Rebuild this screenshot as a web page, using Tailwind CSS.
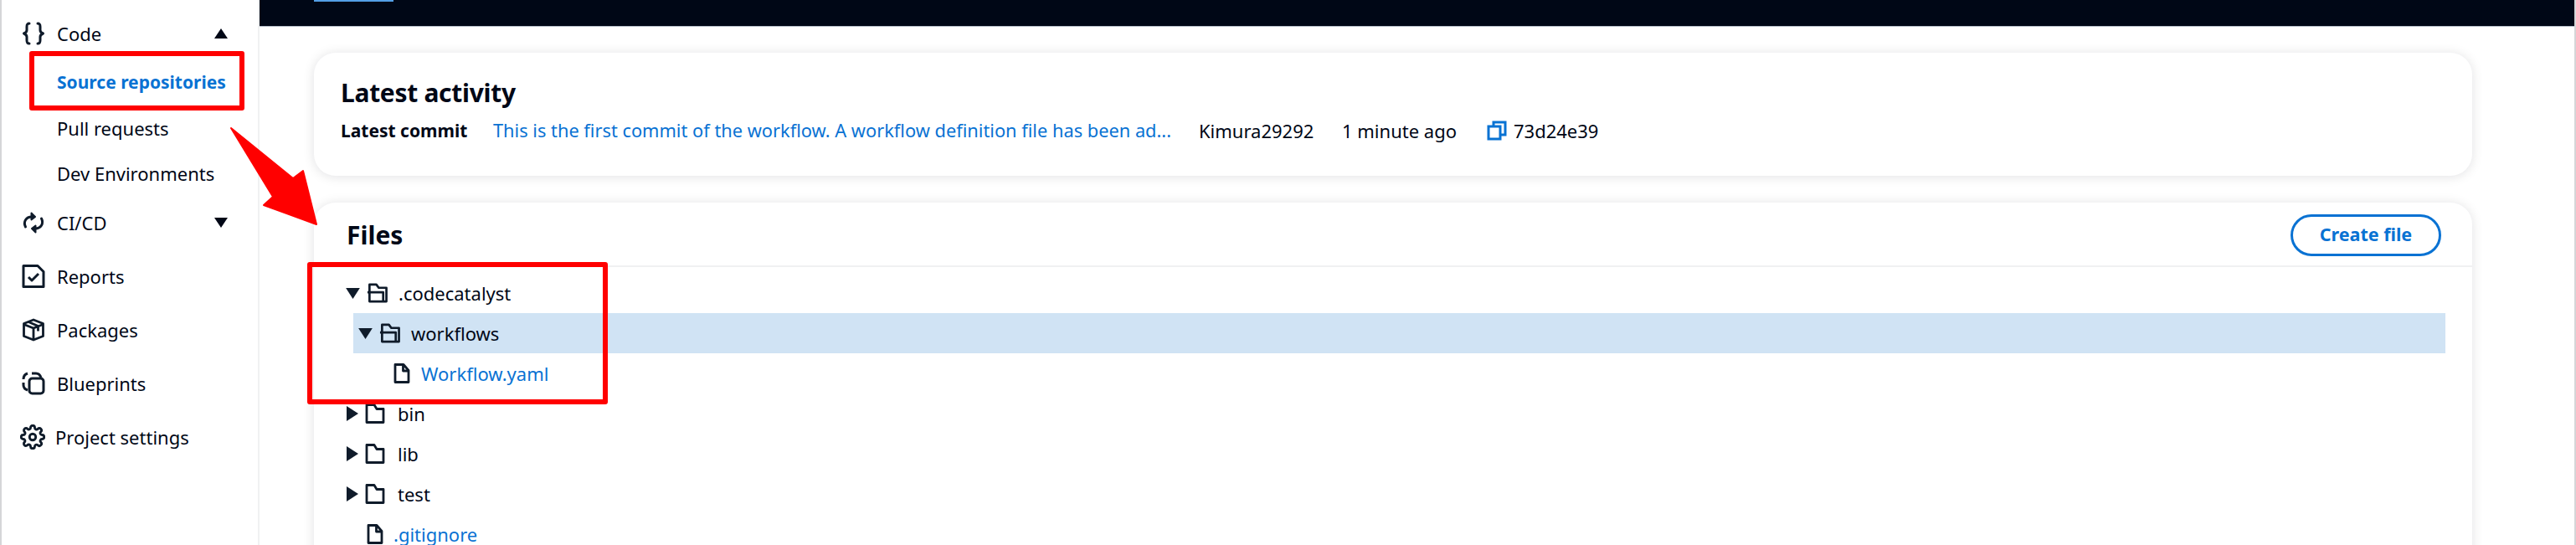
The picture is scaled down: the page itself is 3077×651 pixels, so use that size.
<!DOCTYPE html>
<html>
<head>
<meta charset="utf-8">
<script src="https://cdn.jsdelivr.net/npm/@tailwindcss/browser@4"></script>
</head>
<body class="bg-white">
<div class="relative flex w-[3077px] h-[651px] overflow-hidden bg-white border-x-2 border-[#d5d6d8] font-['Noto_Sans',sans-serif] text-[22px] text-[#000716]">
  <nav class="w-[308px] h-full shrink-0 border-r-2 border-[#f0f1f2] pt-2">
    <div class="flex items-center h-[64px]">
      <svg class="ml-[24px] w-[28px] h-[28px]" viewBox="0 0 28 28" fill="none" stroke="#0f1b2a" stroke-width="3" stroke-linecap="round" stroke-linejoin="round"><path d="M9 2C6 2 6 4 6 6v4c0 2-1 3-3.500 4C5 15 6 16 6 18v4c0 2 0 4 3 4"/><path d="M19 2c3 0 3 2 3 4v4c0 2 1 3 3.500 4-2.500 1-3.500 2-3.500 4v4c0 2 0 4-3 4"/></svg>
      <span class="ml-[14px] flex-1">Code</span>
      <svg class="mr-[36px] w-[16px] h-[12px]" viewBox="0 0 16 12"><path d="M8 0l8 12H0z" fill="#000716"/></svg>
    </div>
    <div class="pl-[66px]">
      <div class="h-[54px] flex items-center font-bold text-[21px] text-[#0972d3]">Source repositories</div>
      <div class="h-[54px] flex items-center">Pull requests</div>
      <div class="h-[54px] flex items-center">Dev Environments</div>
    </div>
    <div class="flex items-center h-[64px]">
      <svg class="ml-[24px] w-[28px] h-[28px]" viewBox="0 0 28 28" fill="none" stroke="#0f1b2a" stroke-width="3" stroke-linejoin="round" stroke-linecap="round"><path d="M4.500 19C1.500 13 5 7 12 7"/><path d="M11.500 2.500L16 7l-4.500 3.500z" fill="#0f1b2a" stroke-width="2"/><path d="M23.500 9C26.500 15 23 21 16 21"/><path d="M16.500 25.500L12 21l4.500-3.500z" fill="#0f1b2a" stroke-width="2"/></svg>
      <span class="ml-[14px] flex-1">CI/CD</span>
      <svg class="mr-[36px] w-[16px] h-[12px]" viewBox="0 0 16 12"><path d="M8 12L16 0H0z" fill="#000716"/></svg>
    </div>
    <div class="flex items-center h-[64px]">
      <svg class="ml-[24px] w-[28px] h-[28px]" viewBox="0 0 28 28" fill="none" stroke="#0f1b2a" stroke-width="3" stroke-linejoin="round"><path d="M2 1.500h17L26 8.500V26.500H2z"/><path d="M8 15l4 4 8-8"/></svg>
      <span class="ml-[14px]">Reports</span>
    </div>
    <div class="flex items-center h-[64px]">
      <svg class="ml-[24px] w-[28px] h-[28px]" viewBox="0 0 28 28" fill="none" stroke="#0f1b2a" stroke-width="2.800" stroke-linejoin="round"><path d="M14 2l11.500 4.500v15L14 26 2.500 21.500v-15z"/><path d="M2.500 7.500L14 12l11.500-4.500M14 12v14M8 4.500L19.500 9.500v6"/></svg>
      <span class="ml-[14px]">Packages</span>
    </div>
    <div class="flex items-center h-[64px]">
      <svg class="ml-[24px] w-[28px] h-[28px]" viewBox="0 0 28 28" fill="none" stroke="#0f1b2a" stroke-width="3" stroke-linejoin="round"><rect x="9" y="8" width="17" height="18" rx="3.500"/><path d="M7 22c-3-1-5-3-5-6v-3M2 9c0-3 2-6 5-7M12 2h5c3 0 5 2 6 5"/></svg>
      <span class="ml-[14px]">Blueprints</span>
    </div>
    <div class="flex items-center h-[64px]">
      <svg class="ml-[22px] w-[30px] h-[30px]" viewBox="0 0 24 24" fill="none" stroke="#0f1b2a" stroke-width="2.300" stroke-linejoin="round"><circle cx="12" cy="12" r="3"/><path d="M19.400 15a1.700 1.700 0 0 0 .3 1.800l.1.1a2 2 0 1 1-2.900 2.900l-.1-.1a1.700 1.700 0 0 0-2.800 1.200V21a2 2 0 1 1-4 0v-.1a1.700 1.700 0 0 0-2.900-1.200l-.1.1a2 2 0 1 1-2.800-2.900l.1-.1a1.700 1.700 0 0 0-1.200-2.800H3a2 2 0 1 1 0-4h.1a1.700 1.700 0 0 0 1.200-2.900l-.1-.1a2 2 0 1 1 2.900-2.800l.1.1a1.700 1.700 0 0 0 1.800.3H9a1.700 1.700 0 0 0 1-1.500V3a2 2 0 1 1 4 0v.1a1.700 1.700 0 0 0 2.900 1.200l.1-.1a2 2 0 1 1 2.800 2.900l-.1.1a1.700 1.700 0 0 0-.3 1.800V9a1.700 1.700 0 0 0 1.500 1H21a2 2 0 1 1 0 4h-.1a1.700 1.700 0 0 0-1.500 1z"/></svg>
      <span class="ml-[12px]">Project settings</span>
    </div>
  </nav>

  <main class="flex-1 min-w-0">
    <div class="h-[32px] bg-[#000716] border-b border-[#b6bec9]">
      <div class="ml-[65px] w-[95px] h-[2px] bg-[#539fe5]"></div>
    </div>
    <div class="pl-[65px] pr-[122px] pt-[31px] flex flex-col gap-[32px]">
      <section class="h-[147px] rounded-[26px] bg-white shadow-[0_1px_14px_rgba(0,7,22,0.12)] px-[32px] pt-[26px]">
        <h2 class="text-[30px] leading-[44px] font-bold tracking-[-0.3px]">Latest activity</h2>
        <div class="mt-[8px] flex items-center leading-[30px] whitespace-nowrap">
          <span class="w-[182px] font-bold text-[21px]">Latest commit</span>
          <span class="w-[843px] text-[#0972d3] text-[21.800px]">This is the first commit of the workflow. A workflow definition file has been ad...</span>
          <span class="w-[171px]">Kimura29292</span>
          <span class="w-[173px]">1 minute ago</span>
          <svg class="w-[24px] h-[24px] mr-[8px]" viewBox="0 0 24 24" fill="none" stroke="#0972d3" stroke-width="3"><rect x="2" y="7" width="14" height="15"/><path d="M8 7V2h14v15h-6"/></svg>
          <span>73d24e39</span>
        </div>
      </section>
      <section class="h-[500px] rounded-[26px] bg-white shadow-[0_1px_14px_rgba(0,7,22,0.12)]">
        <header class="h-[77px] pt-[2px] border-b-2 border-[#f0f1f2] flex items-center justify-between pl-[39px] pr-[37px]">
          <h2 class="text-[30px] font-bold leading-[44px]">Files</h2>
          <button class="h-[50px] w-[180px] rounded-full border-[3px] border-[#0972d3] bg-white text-[#0972d3] font-bold text-[21.500px]">Create file</button>
        </header>
        <ul class="pt-[7px] pl-[38px] pr-[32px]">
          <li class="h-[48px] flex items-center">
            <svg class="w-[17px] h-[13px]" viewBox="0 0 18 14"><path d="M9 14L18 0H0z" fill="#0f1b2a"/></svg>
            <svg class="ml-[8px] w-[25px] h-[24px]" viewBox="0 0 26 24" fill="none" stroke="#0f1b2a" stroke-width="2.800" stroke-linejoin="round"><path d="M3.500 22.500V1.500h8.500l3 4h9.500v17z"/><path d="M1 11h19.500v11.500"/></svg>
            <span class="ml-[13px]">.codecatalyst</span>
          </li>
          <li class="h-[48px] flex items-center bg-[#d0e3f4] ml-[9px]">
            <svg class="ml-[6px] w-[17px] h-[13px]" viewBox="0 0 18 14"><path d="M9 14L18 0H0z" fill="#0f1b2a"/></svg>
            <svg class="ml-[8px] w-[25px] h-[24px]" viewBox="0 0 26 24" fill="none" stroke="#0f1b2a" stroke-width="2.800" stroke-linejoin="round"><path d="M3.500 22.500V1.500h8.500l3 4h9.500v17z"/><path d="M1 11h19.500v11.500"/></svg>
            <span class="ml-[13px]">workflows</span>
          </li>
          <li class="h-[48px] flex items-center pl-[57px]">
            <svg class="w-[20px] h-[24px]" viewBox="0 0 20 24" fill="none" stroke="#0f1b2a" stroke-width="2.800" stroke-linejoin="round"><path d="M2 1.500h10l6 7v14H2z"/><path d="M11.500 1.500v7.500h6.500"/></svg>
            <span class="ml-[13px] text-[#0972d3]">Workflow.yaml</span>
          </li>
          <li class="h-[48px] flex items-center">
            <svg class="ml-[1px] w-[14px] h-[18px]" viewBox="0 0 14 18"><path d="M14 9L0 18V0z" fill="#0f1b2a"/></svg>
            <svg class="ml-[8px] w-[24px] h-[24px]" viewBox="0 0 24 24" fill="none" stroke="#0f1b2a" stroke-width="2.800" stroke-linejoin="round"><path d="M2 22.500V1.500h9l3 5h8v16z"/></svg>
            <span class="ml-[15px]">bin</span>
          </li>
          <li class="h-[48px] flex items-center">
            <svg class="ml-[1px] w-[14px] h-[18px]" viewBox="0 0 14 18"><path d="M14 9L0 18V0z" fill="#0f1b2a"/></svg>
            <svg class="ml-[8px] w-[24px] h-[24px]" viewBox="0 0 24 24" fill="none" stroke="#0f1b2a" stroke-width="2.800" stroke-linejoin="round"><path d="M2 22.500V1.500h9l3 5h8v16z"/></svg>
            <span class="ml-[15px]">lib</span>
          </li>
          <li class="h-[48px] flex items-center">
            <svg class="ml-[1px] w-[14px] h-[18px]" viewBox="0 0 14 18"><path d="M14 9L0 18V0z" fill="#0f1b2a"/></svg>
            <svg class="ml-[8px] w-[24px] h-[24px]" viewBox="0 0 24 24" fill="none" stroke="#0f1b2a" stroke-width="2.800" stroke-linejoin="round"><path d="M2 22.500V1.500h9l3 5h8v16z"/></svg>
            <span class="ml-[15px]">test</span>
          </li>
          <li class="h-[48px] flex items-center pl-[25px]">
            <svg class="w-[20px] h-[24px]" viewBox="0 0 20 24" fill="none" stroke="#0f1b2a" stroke-width="2.800" stroke-linejoin="round"><path d="M2 1.500h10l6 7v14H2z"/><path d="M11.500 1.500v7.500h6.500"/></svg>
            <span class="ml-[12px] text-[#0972d3]">.gitignore</span>
          </li>
        </ul>
      </section>
    </div>
  </main>

  <div class="absolute left-[33px] top-[61px] w-[257px] h-[71px] border-[6px] border-[#ff0000] rounded-[3px]"></div>
  <div class="absolute left-[365px] top-[313px] w-[359px] h-[170px] border-[6px] border-[#ff0000] rounded-[3px]"></div>
  <svg class="absolute left-0 top-0" width="500" height="300" viewBox="0 0 500 300"><path d="M274 153L348 213L360 204L376 268L313 245L324 235Z" fill="#ff0000" stroke="#ff0000" stroke-width="2" stroke-linejoin="round"/></svg>
</div>
</body>
</html>
